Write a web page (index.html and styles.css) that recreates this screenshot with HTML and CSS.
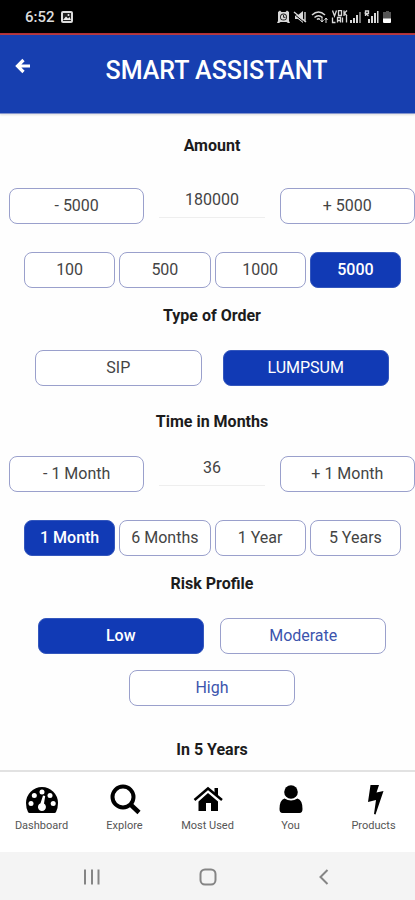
FILE: index.html
```html
<!DOCTYPE html>
<html lang="en">
<head>
<meta charset="utf-8">
<meta name="viewport" content="width=device-width, initial-scale=1">
<title>Smart Assistant</title>
<link rel="stylesheet" href="styles.css">
</head>
<body>
<div class="status">
  <span class="clock">6:52</span>
  <svg class="picture" viewBox="0 0 14 14" width="14" height="14"><rect x="1" y="1" width="12" height="12" rx="2" fill="#ddd"/><rect x="3" y="3" width="8" height="8" fill="#222"/><path d="M3 10 6 6.500l2 2L9.500 7 11 10z" fill="#eee"/><circle cx="8.500" cy="5" r="1" fill="#eee"/></svg>
  <svg class="signals" viewBox="0 0 116 14" width="116" height="14" fill="#d8d8d8">
    <path d="M1 2 3 .5 4.500 2h4L10 .5 12 2v9l1 2h-2L9.500 12h-6L2 13H0l1-2z"/>
    <circle cx="6.500" cy="7" r="3.500" fill="#222"/><circle cx="6.500" cy="7" r="2.600"/><path d="M6.500 5v2.300h2" fill="none" stroke="#222"/>
    <path d="M18 5h3l5-4v12l-5-4h-3z"/><path d="m17 2 12 10M28 2v10" stroke="#d8d8d8" stroke-width="1.400"/><path d="m17 4 11 9" stroke="#000"/>
    <g fill="none" stroke="#d8d8d8" stroke-width="1.500"><path d="M35 5q6.500-6 13 0M37.500 7.500q4-3.500 8 0M40 9.500q1.500-1.500 3 0"/><path d="M45 7v5m-1.500-2L45 12l1.500-2M49 13V8m-1.500 2L49 8l1.500 2" stroke-width="1"/></g>
    <g fill="none" stroke="#d8d8d8"><path d="M55.500.5 57.500 6l2-5.500M61.500.5h3v5h-3zM67 .5V6M70 .5 67.500 3 70 6M55.500 7.500v5h3M60.500 12.500v-5h3v5m-3-2h3M65.500 7.500v5M69.500 6v6.500" stroke-width="1.300"/></g>
    <path d="M73 10h2v3h-2zM76 8h2v5h-2zM79 5h2v8h-2z"/><path d="M82 2h2v11h-2z" fill="#777"/>
    <path d="M88.500 6V1h3v2.500h-3l3 2.500" fill="none" stroke="#d8d8d8" stroke-width="1.300"/><path d="M91 9h2v4h-2zM94 6h2v7h-2zM97 3h2v10h-2zM100 1h1.500v12H100z"/>
    <path d="M109 1h3v1h2v7h-8V2h3z" fill="#555"/><path d="M106 8.500h8V12q0 1-1 1h-6q-1 0-1-1z" fill="#fff"/>
  </svg>
</div>
<header class="header">
  <button class="back" aria-label="Back"><svg viewBox="0 0 16 16" width="16" height="16"><path d="M8.500 2 2.500 8l6 6M3 8h12" fill="none" stroke="#fff" stroke-width="3.200"/></svg></button>
  <h1>SMART ASSISTANT</h1>
</header>
<main>
  <section class="first">
    <h2><label for="amount">Amount</label></h2>
    <div class="stepper">
      <button class="btn">- 5000</button>
      <input id="amount" type="text" value="180000">
      <button class="btn">+ 5000</button>
    </div>
    <div class="chips">
      <button class="btn">100</button><button class="btn">500</button><button class="btn">1000</button><button class="btn active">5000</button>
    </div>
  </section>
  <section>
    <h2>Type of Order</h2>
    <div class="choices order">
      <button class="btn">SIP</button><button class="btn active">LUMPSUM</button>
    </div>
  </section>
  <section class="spaced">
    <h2><label for="months">Time in Months</label></h2>
    <div class="stepper">
      <button class="btn">- 1 Month</button>
      <input id="months" type="text" value="36">
      <button class="btn">+ 1 Month</button>
    </div>
    <div class="chips">
      <button class="btn active">1 Month</button><button class="btn">6 Months</button><button class="btn">1 Year</button><button class="btn">5 Years</button>
    </div>
  </section>
  <section>
    <h2>Risk Profile</h2>
    <div class="choices risk">
      <button class="btn active">Low</button><button class="btn">Moderate</button><button class="btn">High</button>
    </div>
  </section>
  <section class="result"><h2>In 5 Years</h2></section>
</main>
<nav class="tabs">
  <a href="#dashboard"><svg viewBox="0 0 32 32" width="32" height="32"><path d="M2 28Q0 24 0 19a16 16 0 0 1 32 0q0 5-2 9-.5 1-1.500 1h-25Q2.500 29 2 28z"/><g fill="#fff"><circle cx="5" cy="19.500" r="2.500"/><circle cx="8.300" cy="11.500" r="2.500"/><circle cx="16" cy="8" r="2.500"/><circle cx="24" cy="11.500" r="2.500"/><circle cx="27.200" cy="19.500" r="2.500"/><path d="m17 11.500 2.200.5-1.200 7.500a4 4 0 1 1-3.500-.3z"/></g></svg>Dashboard</a>
  <a href="#explore"><svg viewBox="0 0 32 32" width="32" height="32"><g fill="none" stroke="#000"><circle cx="14" cy="13" r="10.500" stroke-width="4"/><path d="m21.500 20.500 8.500 8" stroke-width="4.500"/></g></svg>Explore</a>
  <a href="#most-used"><svg viewBox="0 0 32 32" width="32" height="32"><path d="M6.500 17.500 16 9l10 8.500V27h-7v-8h-5v8H6.500z"/><path d="m2.500 16 13.500-11.500L30 16" fill="none" stroke="#000" stroke-width="2.500"/><path d="M22.500 4H26v8.500l-3.500-3z"/></svg>Most Used</a>
  <a href="#you"><svg viewBox="0 0 32 32" width="32" height="32"><circle cx="16" cy="8" r="6.800"/><path d="M9.500 14.500q6.500 4 13 0 5 1.500 5 10.500 0 4-3 4h-17q-3 0-3-4 0-9 5-10.500z"/></svg>You</a>
  <a href="#products"><svg viewBox="0 0 32 32" width="32" height="32"><path d="M12.500 1h8.500l-2.500 7.500 7-1.500L17.500 30.500l-1.500-.5 2-14-8 2z"/></svg>Products</a>
</nav>
<div class="system">
  <button aria-label="Recent apps"><svg viewBox="0 0 18 18" width="18" height="18"><path d="M2 1.500v15M9 1.500v15M15.500 1.500v15"/></svg></button>
  <button aria-label="Home"><svg viewBox="0 0 18 18" width="18" height="18"><rect x="1.500" y="1.500" width="15" height="15" rx="4.500"/></svg></button>
  <button aria-label="Go back"><svg viewBox="0 0 18 18" width="18" height="18"><path d="m12.500 2-7 7 7 7"/></svg></button>
</div>
</body>
</html>
```
FILE: styles.css
```css
* { box-sizing: border-box; }

body {
  margin: 0;
  min-height: 100vh;
  display: flex;
  flex-direction: column;
  overflow-x: hidden;
  background: #fefefe;
  color: #444;
  font-family: Roboto, sans-serif;
  font-size: 16px;
}

button, input { font: inherit; color: inherit; margin: 0; }
button { padding: 0; border: 0; background: none; }
svg { display: block; }

.status {
  display: flex;
  align-items: center;
  height: 35px;
  padding: 0 22px 0 25px;
  background: #000;
  border-bottom: 2px solid #b03037;
  color: #ddd;
}
.clock { margin-right: 5px; font-size: 15px; font-weight: 500; }
.signals { margin-left: auto; }

.header {
  display: grid;
  grid-template-columns: 46px 1fr 28px;
  align-items: start;
  padding: 16px 0 22px;
  background: #173fb0;
  border-bottom: 1px solid #8494cc;
  box-shadow: 0 1px 2px #ddd;
}
.back { display: grid; place-items: center; height: 30px; }
h1 {
  margin: 0;
  color: #fff;
  font-size: 25px;
  line-height: 40px;
  font-weight: 500;
  text-align: center;
}

main { flex: 1; padding-left: 9px; }
section { padding-top: 16px; }
.first { padding-top: 20px; }
.spaced { padding-top: 24px; }
.result { padding-top: 32px; }
h2 {
  margin: 0 0 22px;
  color: #1c1c1c;
  font-size: 16px;
  line-height: 24px;
  font-weight: 700;
  text-align: center;
}
.first h2 { margin-bottom: 30px; }
.result h2 { margin-bottom: 0; }

.btn {
  height: 36px;
  padding-bottom: 2px;
  border: 1px solid #9aa0cc;
  border-radius: 8px;
  background: #fff;
}
.btn.active { background: #113ab5; border-color: #3457bd; color: #fff; }

.stepper {
  display: grid;
  grid-template-columns: 1fr 1fr 1fr;
  align-items: start;
  margin-bottom: 28px;
}
.stepper input {
  min-width: 0;
  height: 30px;
  margin: 0 15px;
  padding: 0 0 7px;
  border: 0;
  border-bottom: 1px solid #eee;
  background: none;
  text-align: center;
}
.chips {
  display: grid;
  grid-template-columns: repeat(4, 1fr);
  gap: 4px;
  margin: 0 14px 0 15px;
}
.chips .active, .risk .active { font-weight: 500; }
.choices {
  display: flex;
  flex-wrap: wrap;
  justify-content: center;
  gap: 16px;
}
.choices .btn { width: 41%; }
.order { column-gap: 21px; }
.risk .btn:not(.active) { color: #3c54ad; }

.tabs {
  display: grid;
  grid-template-columns: repeat(5, 1fr);
  height: 82px;
  padding-top: 12px;
  border-top: 2px solid #e2e2e2;
  background: #fff;
}
.tabs a {
  display: flex;
  flex-direction: column;
  align-items: center;
  gap: 3px;
  color: #555;
  font-size: 11px;
  line-height: 14px;
  text-decoration: none;
}
.tabs svg { fill: #000; }

.system {
  display: grid;
  grid-template-columns: repeat(3, 1fr);
  height: 48px;
  padding: 2px 33px 0 34px;
  background: #f4f4f4;
}
.system button { display: grid; place-items: center; }
.system svg { fill: none; stroke: #858585; stroke-width: 2; }
```
